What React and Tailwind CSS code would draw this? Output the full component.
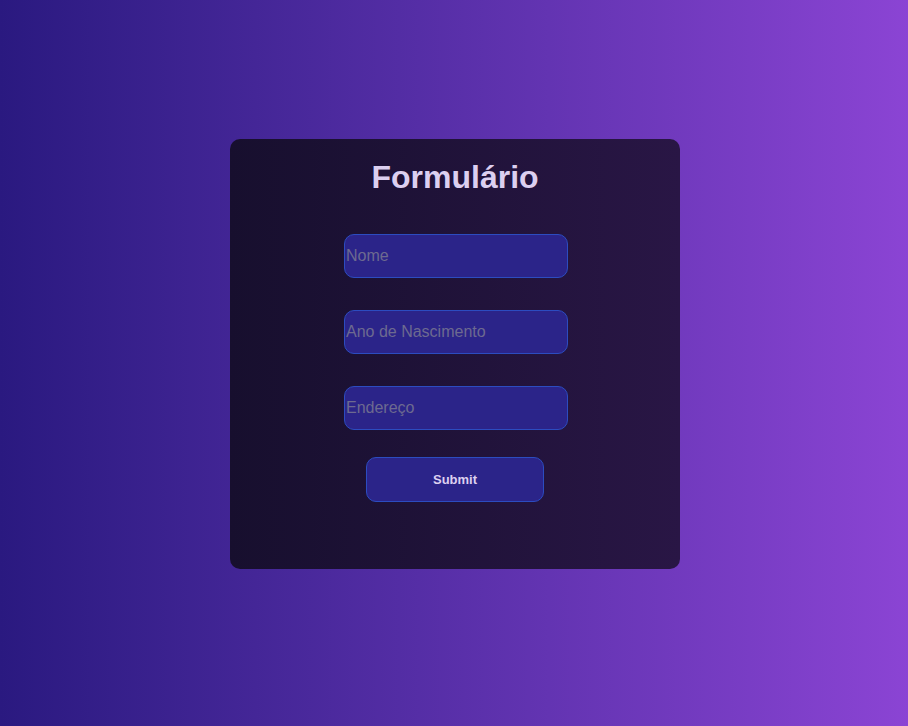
export default function App() {
  const inputCls =
    "w-[224px] h-[44px] rounded-[10px] bg-[#2b2489] border border-[#2c4cc0] text-[16px] text-[#ddd0f0] placeholder:text-[#6d6a90] px-px outline-none";
  return (
    <div className="w-full h-[726px] bg-gradient-to-r from-[#2a1980] to-[#8b44d4] flex items-start justify-center pt-[139px] pl-[2px] font-['Liberation_Sans',Arial,sans-serif]">
      <div className="w-[450px] h-[430px] rounded-[10px] bg-gradient-to-r from-[#170f2e] to-[#291645] flex flex-col items-center pt-5">
        <h1 className="text-[32px] leading-[37px] font-bold text-[#dccff0]">Formulário</h1>
        <form className="flex flex-col items-center mt-[38px]" onSubmit={(e) => e.preventDefault()}>
          <input placeholder="Nome" className={`${inputCls} ml-[2px]`} />
          <input placeholder="Ano de Nascimento" className={`${inputCls} mt-8 ml-[2px]`} />
          <input placeholder="Endereço" className={`${inputCls} mt-8 ml-[2px]`} />
          <button
            type="submit"
            className="mt-[27px] w-[178px] h-[45px] rounded-[10px] bg-[#2b2489] border border-[#2c4cc0] text-[13px] font-bold text-[#ddd0f0]"
          >
            Submit
          </button>
        </form>
      </div>
    </div>
  );
}
